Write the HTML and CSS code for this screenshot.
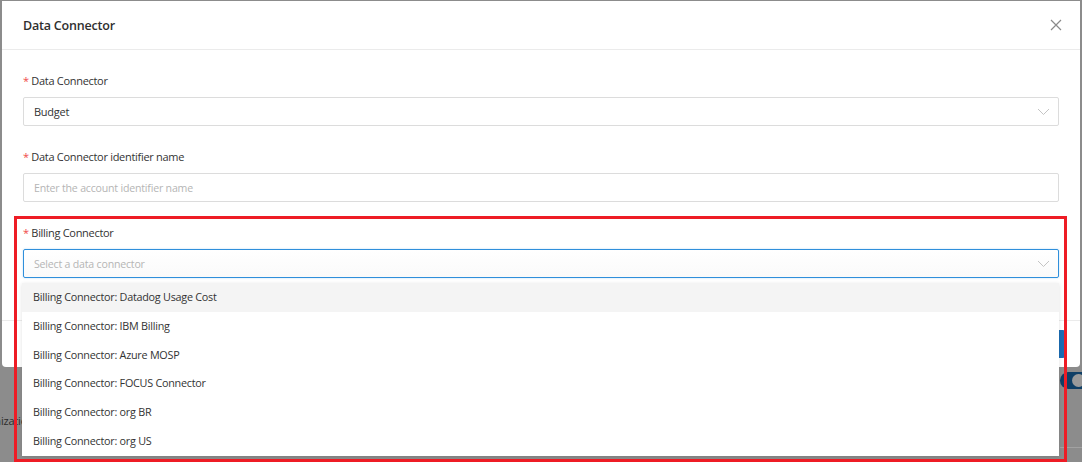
FILE: index.html
```html
<!DOCTYPE html>
<html>
<head>
<meta charset="utf-8">
<link rel="stylesheet" href="styles.css">
</head>
<body>
<div class="backdrop-page">
  <span class="bg-text">Organization</span>
  <span class="bg-toggle"><span class="bg-knob"></span></span>
  <span class="bg-line"></span>
</div>
<div class="modal">
  <div class="modal-header">
    <span class="modal-title">Data Connector</span>
    <svg class="close" width="12" height="12" viewBox="0 0 12 12"><path d="M1 1L11 11M11 1L1 11" stroke="#8a8a8a" stroke-width="1.2" fill="none"/></svg>
  </div>
  <div class="modal-body">
    <div class="field">
      <label class="label"><span class="req">*</span> Data Connector</label>
      <div class="select">
        <span class="value">Budget</span>
        <svg class="chev" width="13" height="8" viewBox="0 0 13 8"><path d="M1 1L6.5 6.5L12 1" stroke="#c4c4c4" stroke-width="1" fill="none"/></svg>
      </div>
    </div>
    <div class="field">
      <label class="label"><span class="req">*</span> Data Connector identifier name</label>
      <div class="select input">
        <span class="placeholder">Enter the account identifier name</span>
      </div>
    </div>
    <div class="field">
      <label class="label"><span class="req">*</span> Billing Connector</label>
      <div class="select focused">
        <span class="placeholder">Select a data connector</span>
        <svg class="chev" width="13" height="8" viewBox="0 0 13 8"><path d="M1 1L6.5 6.5L12 1" stroke="#c4c4c4" stroke-width="1" fill="none"/></svg>
      </div>
    </div>
  </div>
  <div class="modal-footer">
    <button class="btn-primary">Save</button>
  </div>
</div>
<ul class="dropdown">
  <li class="item active">Billing Connector: Datadog Usage Cost</li>
  <li class="item">Billing Connector: IBM Billing</li>
  <li class="item">Billing Connector: Azure MOSP</li>
  <li class="item">Billing Connector: FOCUS Connector</li>
  <li class="item">Billing Connector: org BR</li>
  <li class="item">Billing Connector: org US</li>
</ul>
<div class="highlight"></div>
</body>
</html>
```
FILE: styles.css
```css
* { box-sizing: border-box; }
html, body { margin: 0; padding: 0; }
body {
  width: 1082px;
  height: 462px;
  overflow: hidden;
  position: relative;
  background: #8c8c8c;
  font-family: "Open Sans", "Noto Sans", sans-serif;
  color: #333;
}
.backdrop-page { position: absolute; inset: 0; }
.bg-text {
  position: absolute;
  left: -30px;
  top: 413px;
  font-size: 11px;
  letter-spacing: -0.2px;
  color: #2b2b2b;
}
.bg-toggle {
  position: absolute;
  left: 1060px;
  top: 372px;
  width: 34px;
  height: 17px;
  border-radius: 9px;
  background: #0f3f66;
}
.bg-knob {
  position: absolute;
  left: 12px;
  top: 2px;
  width: 13px;
  height: 13px;
  border-radius: 50%;
  background: #9a9a9a;
}
.bg-line {
  position: absolute;
  left: 1060px;
  top: 447px;
  width: 30px;
  height: 1px;
  background: #a2a2a2;
}
.modal {
  position: absolute;
  left: 2px;
  top: 1px;
  width: 1078px;
  height: 366px;
  background: #fff;
  border-radius: 0 0 4px 4px;
  display: flex;
  flex-direction: column;
}
.modal-header {
  height: 49px;
  border-bottom: 1px solid #ebebeb;
  display: flex;
  align-items: center;
  justify-content: space-between;
  padding: 0 18px 0 21px;
}
.modal-title {
  font-size: 12.5px;
  font-weight: 600;
  color: #2f2f2f;
  letter-spacing: -0.2px;
}
.close { display: block; }
.modal-body {
  padding: 23px 21px 0 21px;
  display: flex;
  flex-direction: column;
  gap: 23px;
  height: 270px;
}
.field { display: flex; flex-direction: column; gap: 8px; }
.label {
  font-size: 11px;
  line-height: 16px;
  letter-spacing: -0.3px;
  color: #333;
}
.req { color: #f04a4a; }
.select {
  height: 29px;
  border: 1px solid #dcdcdc;
  border-radius: 2px;
  display: flex;
  align-items: center;
  justify-content: space-between;
  padding: 0 8px 0 10px;
  font-size: 11px;
  letter-spacing: -0.25px;
  background: #fff;
}
.value { color: #333; }
.placeholder { color: #b5b5b5; font-size: 10.6px; letter-spacing: -0.2px; }
.chev { display: block; }
.select.focused {
  border-color: #2f8fdb;
  box-shadow: 0 0 2px rgba(47,143,219,0.35);
  background: linear-gradient(#fff, #fafafa);
}
.modal-footer {
  flex: 1;
  border-top: 1px solid #ebebeb;
  display: flex;
  justify-content: flex-end;
  align-items: flex-start;
  padding: 9px 15px 0 0;
}
.btn-primary {
  height: 28px;
  width: 70px;
  border: none;
  border-radius: 2px;
  background: #1b6db4;
  color: #fff;
  font-family: inherit;
  font-size: 12px;
}
.dropdown {
  position: absolute;
  left: 22px;
  top: 283px;
  width: 1037px;
  margin: 0;
  padding: 0;
  list-style: none;
  background: #fff;
  box-shadow: 0 1px 4px rgba(0,0,0,0.12);
}
.item {
  height: 28.8px;
  line-height: 28.8px;
  padding-left: 11px;
  font-size: 10.8px;
  letter-spacing: -0.25px;
  color: #333;
}
.item.active { background: #f4f4f4; }
.highlight {
  position: absolute;
  left: 14px;
  top: 216px;
  width: 1053px;
  height: 246px;
  border: 3px solid #ee1c25;
}
```
